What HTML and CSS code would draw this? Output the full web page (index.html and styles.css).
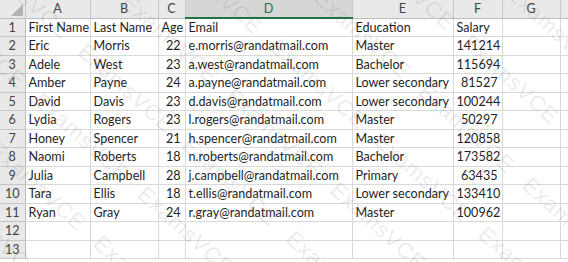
FILE: index.html
```html
<!DOCTYPE html>
<html lang="en">

<head>
  <meta charset="UTF-8">
  <title>Employees sheet</title>
  <link rel="stylesheet" href="styles.css">
</head>

<body>
  <div class="sheet">
    <table class="grid">
      <colgroup>
        <col class="c-rh">
        <col class="c-a">
        <col class="c-b">
        <col class="c-c">
        <col class="c-d">
        <col class="c-e">
        <col class="c-f">
        <col class="c-g">
        <col class="c-h">
      </colgroup>
      <thead>
        <tr>
          <th class="corner"><span class="tri"></span></th>
          <th>A</th>
          <th>B</th>
          <th>C</th>
          <th class="active">D</th>
          <th>E</th>
          <th>F</th>
          <th>G</th>
          <th class="rest"></th>
        </tr>
      </thead>
      <tbody>
        <tr><th>1</th><td>First Name</td><td>Last Name</td><td>Age</td><td>Email</td><td>Education</td><td>Salary</td><td></td><td></td></tr>
        <tr><th>2</th><td>Eric</td><td>Morris</td><td class="num">22</td><td>e.morris@randatmail.com</td><td>Master</td><td class="num">141214</td><td></td><td></td></tr>
        <tr><th>3</th><td>Adele</td><td>West</td><td class="num">23</td><td>a.west@randatmail.com</td><td>Bachelor</td><td class="num">115694</td><td></td><td></td></tr>
        <tr><th>4</th><td>Amber</td><td>Payne</td><td class="num">24</td><td>a.payne@randatmail.com</td><td>Lower secondary</td><td class="num">81527</td><td></td><td></td></tr>
        <tr><th>5</th><td>David</td><td>Davis</td><td class="num">23</td><td>d.davis@randatmail.com</td><td>Lower secondary</td><td class="num">100244</td><td></td><td></td></tr>
        <tr><th>6</th><td>Lydia</td><td>Rogers</td><td class="num">23</td><td>l.rogers@randatmail.com</td><td>Master</td><td class="num">50297</td><td></td><td></td></tr>
        <tr><th>7</th><td>Honey</td><td>Spencer</td><td class="num">21</td><td>h.spencer@randatmail.com</td><td>Master</td><td class="num">120858</td><td></td><td></td></tr>
        <tr><th>8</th><td>Naomi</td><td>Roberts</td><td class="num">18</td><td>n.roberts@randatmail.com</td><td>Bachelor</td><td class="num">173582</td><td></td><td></td></tr>
        <tr><th>9</th><td>Julia</td><td>Campbell</td><td class="num">28</td><td>j.campbell@randatmail.com</td><td>Primary</td><td class="num">63435</td><td></td><td></td></tr>
        <tr><th>10</th><td>Tara</td><td>Ellis</td><td class="num">18</td><td>t.ellis@randatmail.com</td><td>Lower secondary</td><td class="num">133410</td><td></td><td></td></tr>
        <tr><th>11</th><td>Ryan</td><td>Gray</td><td class="num">24</td><td>r.gray@randatmail.com</td><td>Master</td><td class="num">100962</td><td></td><td></td></tr>
        <tr><th>12</th><td></td><td></td><td></td><td></td><td></td><td></td><td></td><td></td></tr>
        <tr><th>13</th><td></td><td></td><td></td><td></td><td></td><td></td><td></td><td></td></tr>
      </tbody>
    </table>

    <!-- watermark over the sheet -->
    <div class="watermark">
      <span>ExamsVCE</span><span>ExamsVCE</span><span>ExamsVCE</span><span>ExamsVCE</span><span>ExamsVCE</span><span>ExamsVCE</span><span>ExamsVCE</span>
      <span>ExamsVCE</span><span>ExamsVCE</span><span>ExamsVCE</span><span>ExamsVCE</span><span>ExamsVCE</span><span>ExamsVCE</span><span>ExamsVCE</span>
      <span>ExamsVCE</span><span>ExamsVCE</span><span>ExamsVCE</span><span>ExamsVCE</span><span>ExamsVCE</span><span>ExamsVCE</span><span>ExamsVCE</span>
      <span>ExamsVCE</span><span>ExamsVCE</span><span>ExamsVCE</span><span>ExamsVCE</span><span>ExamsVCE</span><span>ExamsVCE</span><span>ExamsVCE</span>
      <span>ExamsVCE</span><span>ExamsVCE</span><span>ExamsVCE</span><span>ExamsVCE</span><span>ExamsVCE</span><span>ExamsVCE</span><span>ExamsVCE</span>
      <span>ExamsVCE</span><span>ExamsVCE</span><span>ExamsVCE</span><span>ExamsVCE</span><span>ExamsVCE</span><span>ExamsVCE</span><span>ExamsVCE</span>
      <span>ExamsVCE</span><span>ExamsVCE</span><span>ExamsVCE</span><span>ExamsVCE</span><span>ExamsVCE</span><span>ExamsVCE</span><span>ExamsVCE</span>
      <span>ExamsVCE</span><span>ExamsVCE</span><span>ExamsVCE</span><span>ExamsVCE</span><span>ExamsVCE</span><span>ExamsVCE</span><span>ExamsVCE</span>
      <span>ExamsVCE</span><span>ExamsVCE</span><span>ExamsVCE</span><span>ExamsVCE</span><span>ExamsVCE</span><span>ExamsVCE</span><span>ExamsVCE</span>
      <span>ExamsVCE</span><span>ExamsVCE</span><span>ExamsVCE</span><span>ExamsVCE</span><span>ExamsVCE</span><span>ExamsVCE</span><span>ExamsVCE</span>
    </div>
  </div>
</body>

</html>
```

FILE: styles.css
```css
body {
  margin: 0;
  background-color: #ffffff;
  font-family: "Lato", "Liberation Sans", sans-serif;
  color: #1f1f1f;
}

.sheet {
  position: relative;
  width: 568px;
  height: 262px;
  overflow: hidden;
}

.grid {
  border-collapse: collapse;
  table-layout: fixed;
  width: 568px;
  font-size: 12.6px;
}

.c-rh { width: 25px; }
.c-a { width: 65px; }
.c-b { width: 68px; }
.c-c { width: 27px; }
.c-d { width: 167px; }
.c-e { width: 101px; }
.c-f { width: 49px; }
.c-g { width: 58px; }
.c-h { width: 8px; }

.grid th,
.grid td {
  height: 18.5px;
  padding: 0 3px;
  white-space: nowrap;
  overflow: hidden;
  line-height: 17px;
  box-sizing: border-box;
}

.grid td {
  border: 1px solid #d9d9d9;
}

.grid td.num {
  text-align: right;
  padding-right: 4px;
}

.grid thead th {
  height: 18px;
  background-color: #e9e9e9;
  color: #444;
  font-weight: normal;
  text-align: center;
  border-right: 1px solid #c6c6c6;
  border-bottom: 1px solid #bdbdbd;
}

.grid thead th.active {
  background-color: #d6d6d6;
  color: #217346;
  border-bottom: 2px solid #217346;
}

.grid thead th.rest {
  border-right: none;
}

.grid tbody th {
  background-color: #e9e9e9;
  color: #444;
  font-weight: normal;
  text-align: center;
  padding: 0;
  border-right: 1px solid #bdbdbd;
  border-bottom: 1px solid #c6c6c6;
}

.corner {
  position: relative;
}

.tri {
  position: absolute;
  right: 2px;
  bottom: 2px;
  width: 0;
  height: 0;
  border-left: 12px solid transparent;
  border-bottom: 12px solid #b4b4b4;
}

.watermark {
  position: absolute;
  top: -200px;
  left: -200px;
  width: 980px;
  display: grid;
  grid-template-columns: repeat(7, 140px);
  grid-auto-rows: 66px;
  transform: rotate(42deg);
  transform-origin: 490px 330px;
  pointer-events: none;
}

.watermark span {
  font-family: "Liberation Sans", sans-serif;
  font-size: 22px;
  color: rgba(90, 90, 90, 0.13);
  letter-spacing: 1px;
}
```
